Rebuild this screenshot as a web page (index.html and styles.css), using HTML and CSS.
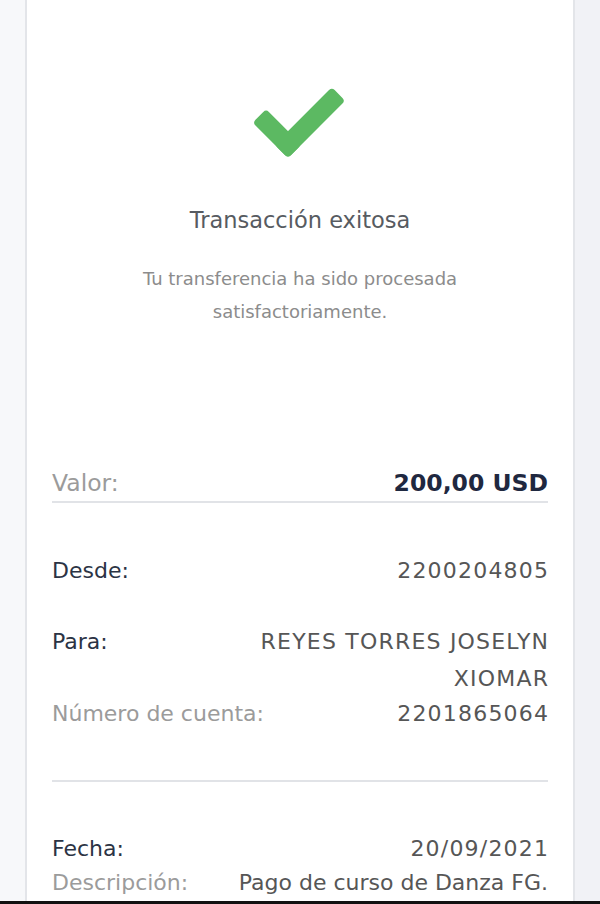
FILE: index.html
```html
<!DOCTYPE html>
<html lang="es">
<head>
  <meta charset="UTF-8" />
  <title>Transacción exitosa</title>
  <link rel="stylesheet" href="styles.css">
</head>
<body>
  <div id="screen">
    <div id="card">
      <div class="status">
        <svg class="check" viewBox="0 0 100 80" aria-hidden="true">
          <g transform="translate(38 74) rotate(-45)" fill="#5cb962">
            <rect x="0" y="-50" width="19" height="50" rx="4"></rect>
            <rect x="0" y="-19" width="81" height="19" rx="4"></rect>
          </g>
        </svg>
        <h1 class="title">Transacción exitosa</h1>
        <p class="subtitle">Tu transferencia ha sido procesada<br>satisfactoriamente.</p>
      </div>

      <div class="details">
        <div class="row total">
          <span class="label muted">Valor:</span>
          <span class="value amount">200,00 USD</span>
        </div>

        <div class="group">
          <div class="row">
            <span class="label">Desde:</span>
            <span class="value wide">2200204805</span>
          </div>
          <div class="row para">
            <span class="label">Para:</span>
            <span class="value wide">REYES TORRES JOSELYN<br>XIOMAR</span>
          </div>
          <div class="row">
            <span class="label muted">Número de cuenta:</span>
            <span class="value wide">2201865064</span>
          </div>
        </div>

        <div class="group last">
          <div class="row">
            <span class="label">Fecha:</span>
            <span class="value wide">20/09/2021</span>
          </div>
          <div class="row tight">
            <span class="label muted">Descripción:</span>
            <span class="value">Pago de curso de Danza FG.</span>
          </div>
        </div>
      </div>
    </div>
    <div id="bottomBar"></div>
  </div>
</body>
</html>
```

FILE: styles.css
```css
* {
  box-sizing: border-box;
}

html, body {
  height: 100%;
  margin: 0;
  font-family: 'DejaVu Sans', 'Open Sans', sans-serif;
  background: #f6f7f9;
  color: #222;
}

body {
  overflow: hidden;
}

#screen {
  display: flex;
  flex-direction: column;
  height: 100vh;
  background: linear-gradient(90deg, #f7f8fa 0%, #f7f8fa 50%, #f1f2f6 50%, #f1f2f6 100%);
}

#card {
  flex: 1;
  margin: 0 25px;
  background: #fff;
  border-left: 2px solid #e3e5e9;
  border-right: 2px solid #e3e5e9;
  overflow: hidden;
}

/* Estado */
.status {
  display: flex;
  flex-direction: column;
  align-items: center;
  padding-top: 84px;
}

.check {
  width: 100px;
  height: 80px;
  display: block;
}

.title {
  margin: 41px 0 0;
  font-size: 22.5px;
  line-height: 30px;
  font-weight: 400;
  color: #575b61;
}

.subtitle {
  margin: 27px 0 0;
  font-size: 18px;
  line-height: 33px;
  text-align: center;
  color: #8c8c8c;
}

/* Detalle */
.details {
  margin-top: 137px;
  padding: 0 25px;
}

.row {
  display: flex;
  justify-content: space-between;
  align-items: flex-start;
  font-size: 22px;
  line-height: 36px;
}

.label {
  color: #2b3344;
  white-space: nowrap;
}

.label.muted {
  color: #9b9b9b;
}

.value {
  text-align: right;
  color: #565656;
}

.value.wide {
  letter-spacing: 1.2px;
  margin-right: -1.2px;
}

.total {
  font-size: 23.5px;
  border-bottom: 2px solid #e1e3e7;
}

.amount {
  color: #1f2840;
  font-weight: 700;
}

.group {
  margin-top: 50px;
  display: flex;
  flex-direction: column;
  gap: 34px;
  padding-bottom: 48px;
  border-bottom: 2px solid #e1e3e7;
}

.group .para + .row {
  margin-top: -35px;
}

.para {
  line-height: 37px;
}

.group.last {
  margin-top: 49px;
  gap: 0;
  border-bottom: none;
  padding-bottom: 0;
}

.tight {
  margin-top: -2px;
}

#bottomBar {
  flex-shrink: 0;
  height: 3px;
  background: #111;
}
```
